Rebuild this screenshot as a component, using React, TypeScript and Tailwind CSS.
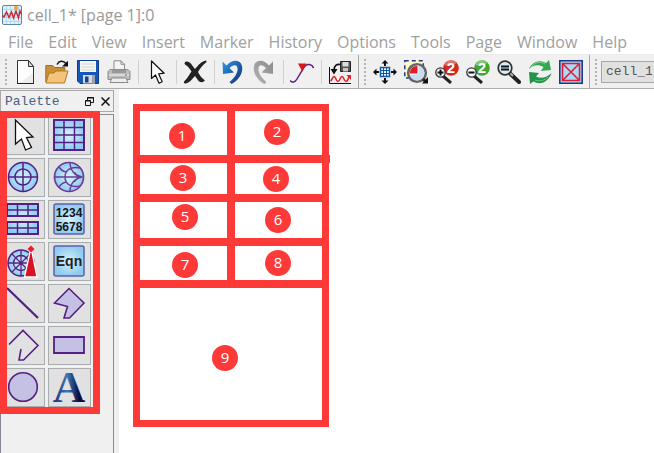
import { useState, type ReactNode } from "react";

// ---------- toolbar icons (24x24) ----------

function Icon24({ children }: { children: ReactNode }) {
  return (
    <svg width="24" height="24" viewBox="0 0 24 24" fill="none" aria-hidden="true">
      {children}
    </svg>
  );
}

function NewIcon() {
  return (
    <Icon24>
      <path d="M3.500 .5h11l5 6v17h-16z" fill="#fdfdfd" stroke="#333" />
      <path d="M14.500 .5v6h5z" fill="#ddd" stroke="#333" strokeLinejoin="round" />
      <path d="M6 23h13V13z" fill="#ececec" />
      <path d="M3 23.500h17" stroke="#222" />
    </Icon24>
  );
}

function OpenIcon() {
  return (
    <Icon24>
      <path d="M.8 22V5.500h7l2 2h10V12" fill="#c98f35" stroke="#a46d22" />
      <path d="M1 23l3-10h5l2-2h12l-3.500 12z" fill="#f2c378" stroke="#b37a2b" strokeLinejoin="round" />
      <path d="M12 4.500c2-4 6-4.500 9-1" stroke="#111" strokeWidth="1.500" />
      <path d="M23 .8v5.700h-6z" fill="#111" />
    </Icon24>
  );
}

function SaveIcon() {
  return (
    <Icon24>
      <path d="M1.500 .5h21v23H4l-2.500-2.500z" fill="#1755b8" stroke="#0c3c8e" />
      <path d="M4 1h16v11H4z" fill="#f3f5f0" />
      <path d="M5.500 4h13M5.500 7h13M5.500 10h13" stroke="#d3d8d0" />
      <path d="M7 15h12v8.500H7z" fill="#d5d9e0" />
      <path d="M9 16.500h3.500v6H9z" fill="#16418f" />
      <path d="M16 15h3v8.500h-3z" fill="#9aa1ad" />
    </Icon24>
  );
}

function PrintIcon() {
  return (
    <Icon24>
      <path d="M7 11V.8h7l3.500 3.500V11z" fill="#f5f5f5" stroke="#8b8b8b" />
      <path d="M14 .8v3.500h3.500" stroke="#8b8b8b" />
      <path d="M3 9.500h18l2 2v8H1v-8z" fill="#bdbdbd" stroke="#8c8c8c" />
      <path d="M5 10h14v3H5z" fill="#999" />
      <path d="M2 15h20" stroke="#e3e3e3" strokeWidth="1.500" />
      <path d="M5 18h14l2 4.500H3z" fill="#ededed" stroke="#8b8b8b" />
      <path d="M18 15h2" stroke="#666" />
    </Icon24>
  );
}

function SelectIcon() {
  return (
    <Icon24>
      <path
        d="M6.500 1v17.500l4-3.500 3.500 8.200 3.200-1.400-3.600-8 5.600-.6z"
        fill="#fff"
        stroke="#111"
        strokeWidth="1.200"
        strokeLinejoin="round"
      />
    </Icon24>
  );
}

function DeleteIcon() {
  return (
    <Icon24>
      <path d="M3 1.500c4.500-.5 6 4 9 7.500C15.500 5 18 1.500 23 .5c.8.500.7 1.500 0 2-4 3-5.500 5.500-8 9.500 2 3.500 3.500 6 7 8.500-3 3-5.500 2-7.500-1L12 16c-3 3-5 6.500-9 7.500-2 .3-3-1-1.500-2.500C5 17.500 6.500 14 8.500 11.500 6.500 8 4.500 6 2 4.500 1 3.500 1.800 2 3 1.500z" fill="#222" />
    </Icon24>
  );
}

function UndoIcon() {
  return (
    <Icon24>
      <defs>
        <linearGradient id="undoFill" x1="0" y1="0" x2="1" y2="1">
          <stop offset="0" stopColor="#2b9ae6" />
          <stop offset="1" stopColor="#14296f" />
        </linearGradient>
      </defs>
      <path d="M1.500 1.500l4 4C10 0 17-1 20 3.500c4 7-2 17-9.500 20.500l-2-2C15 17 18 10 16 6.500c-1.500-2.500-5-1-7.500 1.500l4.500 4.500-11 1.500z" fill="url(#undoFill)" />
    </Icon24>
  );
}

function RedoIcon() {
  return (
    <Icon24>
      <defs>
        <linearGradient id="redoFill" x1="1" y1="0" x2="0" y2="1">
          <stop offset="0" stopColor="#8a8a8a" />
          <stop offset="1" stopColor="#b5b5b5" />
        </linearGradient>
      </defs>
      <path d="M21 1.500l-4 4C12.500 0 6-1 3 3.500c-4 7 2 17 9.500 20.500l2-2C8 17 5 10 7 6.500 8.500 4 11.500 5.500 14 8l-4.500 4.500L21 14z" fill="url(#redoFill)" />
    </Icon24>
  );
}

function MarkerIcon() {
  return (
    <Icon24>
      <path d="M0 20.500c2 2.500 5 2 7-1.500l6-10c2-4 4-5 6.500-4.500C22 5 23 6 23.500 8" stroke="#5b1f8c" strokeWidth="1.500" />
      <path d="M8 3.500h8.500l-4.200 8z" fill="#d8141c" />
    </Icon24>
  );
}

function DataFileIcon() {
  return (
    <Icon24>
      <path d="M12.500 1.500h10v10h-10z" fill="#555" stroke="#222" />
      <path d="M14.500 2h6v4.500h-6z" fill="#ddd" />
      <path d="M15 8h5v3.500h-5z" fill="#c5c5c5" />
      <path d="M12 4.500C9 4 6.500 5 6 10" stroke="#111" strokeWidth="1.700" />
      <path d="M2.500 9h7L6 14.500z" fill="#111" />
      <path d="M1.500 7v16.500H23" stroke="#111" />
      <path d="M2.500 21c2-1 2-4.500 3.500-4.500 2 0 2 5 4 5s2-5 4-5 2 5 4 5 2-3 3-5" stroke="#e0202b" strokeWidth="1.500" />
      <path d="M18.500 15h4.500v5z" fill="#e0202b" />
    </Icon24>
  );
}

function ViewAllIcon() {
  return (
    <Icon24>
      <path d="M7.500 7.500h9v9h-9z" fill="#e8f5ff" stroke="#0c58ad" strokeWidth="1.500" />
      <path d="M10.500 7.500v9M13.500 7.500v9M7.500 10.500h9M7.500 13.500h9" stroke="#0c58ad" />
      <path d="M12 0l3.500 3.500H13V6h-2V3.500H8.500zM12 24l-3.500-3.500H11V18h2v2.500h2.500zM0 12l3.500-3.500V11H6v2H3.500v2.500zM24 12l-3.500 3.500V13H18v-2h2.500V8.500z" fill="#111" />
    </Icon24>
  );
}

function ZoomAreaIcon() {
  return (
    <Icon24>
      <path d="M.8 .8h18.500V18H.8z" fill="#fafbc4" stroke="#1e3d8c" strokeWidth="1.500" strokeDasharray="4 3" />
      <circle cx="13" cy="13" r="8.800" fill="#dceaf5" stroke="#666" strokeWidth="2.600" />
      <path d="M13 5.500a7.500 7.500 0 1 1-7.500 8H13z" fill="#c9dcf0" />
      <path d="M14 14H6c-.5-5 3-8.500 8-8z" fill="#e31c23" />
      <path d="M14 5.500V14H6" stroke="#fff" />
      <path d="M19 19l3 3" stroke="#222" strokeWidth="3" />
      <path d="M18 23.500h6V17z" fill="#111" />
    </Icon24>
  );
}

function ZoomByTwoIcon({ zoomIn }: { zoomIn: boolean }) {
  return (
    <Icon24>
      <circle cx="16" cy="8" r="7.800" fill={zoomIn ? "#d42820" : "#43a72f"} />
      <path d="M9.500 5a7 7 0 0 1 12-2c-3 3-8 3-12 2z" fill="#fff" opacity=".35" />
      <text x="16" y="13" textAnchor="middle" fontFamily="Liberation Sans, sans-serif" fontWeight="700" fontSize="15" fill="#fff">
        2
      </text>
      <path d="M8 16l8 7" stroke="#222" strokeWidth="3" />
      <circle cx="5.500" cy="12.500" r="4.700" fill="#f4faff" stroke="#333" strokeWidth="1.300" />
      <path d={zoomIn ? "M2.500 12.500h6M5.500 9.500v6" : "M2.500 12.500h6"} stroke="#111" strokeWidth="2" />
    </Icon24>
  );
}

function ZoomIcon() {
  return (
    <Icon24>
      <path d="M12.500 13l9.500 9" stroke="#222" strokeWidth="4" strokeLinecap="round" />
      <path d="M13 13l3 3" stroke="#aaa" strokeWidth="2" />
      <circle cx="8" cy="8" r="6.800" fill="#d8ebf8" stroke="#333" strokeWidth="1.700" />
      <path d="M4 6.500h8M4 9.500h8" stroke="#111" strokeWidth="2" />
    </Icon24>
  );
}

function RefreshIcon() {
  return (
    <Icon24>
      <path d="M1 9C4 2 11-1 18 3l3-3 2 10-10 1 2.500-4C10 4 5 5 1 9z" fill="#35a84f" />
      <path d="M1 12l10 1-3 3.500c5 2.500 10 1.500 15.500-3.500C21 21 13 26 5.500 21.500L2 24z" fill="#229447" />
      <path d="M3 7c4-5 9-6 14-3" stroke="#81d08b" />
      <path d="M7 20c5 2 10 0 13-3" stroke="#6bc77b" />
    </Icon24>
  );
}

function NoPlotIcon() {
  return (
    <Icon24>
      <path d="M.8 .8h22.400v22.400H.8z" fill="#a9daf6" stroke="#143d86" strokeWidth="1.600" />
      <path d="M3.500 3.500h17v17h-17zM3.500 3.500l17 17M20.500 3.500l-17 17" stroke="#e31b35" strokeWidth="1.600" />
    </Icon24>
  );
}

// ---------- palette icons (32x32) ----------

function Icon32({ children }: { children: ReactNode }) {
  return (
    <svg className="shrink-0 overflow-visible" width="32" height="32" viewBox="0 0 32 32" fill="none" aria-hidden="true">
      {children}
    </svg>
  );
}

function PointerIcon() {
  return (
    <Icon32>
      <path d="M8.500 1v24l6-5 4 11 6-2.500-5-10 6.500-.5z" fill="#fff" stroke="#111" strokeWidth="1.300" />
    </Icon32>
  );
}

function RectPlotIcon() {
  return (
    <Icon32>
      <path d="M1 1h30v30H1z" fill="url(#skyFill)" stroke="#542084" strokeWidth="2" />
      <path d="M11 1v30M21.500 1v30M1 8.500h30M1 16h30M1 23.500h30" stroke="#542084" strokeWidth="1.500" />
    </Icon32>
  );
}

function PolarIcon() {
  return (
    <Icon32>
      <circle cx="16" cy="16" r="14.500" fill="url(#skyFill)" stroke="#542084" strokeWidth="1.500" />
      <circle cx="16" cy="16" r="8" stroke="#542084" strokeWidth="1.500" />
      <path d="M16 1v30M1 16h30" stroke="#542084" strokeWidth="1.500" />
    </Icon32>
  );
}

function SmithIcon() {
  return (
    <Icon32>
      <circle cx="16" cy="16" r="14.500" fill="url(#skyFill)" stroke="#6a3b98" strokeWidth="1.700" />
      <path
        d="M1.500 16h28M29 16C22 15 17 9 17 1.500M29 16c-7 1-12 7-12 14.500M27 7c-9-2-15 2-15 9s6 11 15 9M29 16c-4-1-7-3-7.500-5M29 16c-4 1-7 3-7.500 5M6 6c2 3 4 4.500 7.500 5M6 26c2-3 4-4.500 7.500-5"
        stroke="#6a3b98"
        strokeWidth="1.400"
      />
    </Icon32>
  );
}

function StackedIcon() {
  return (
    <Icon32>
      <path d="M0 1h31v12H0zM0 19h31v12H0z" fill="url(#skyFill)" stroke="#542084" strokeWidth="2" />
      <path d="M10.500 1v12M21 1v12M0 7h31M10.500 19v12M21 19v12M0 25h31" stroke="#542084" strokeWidth="1.500" />
    </Icon32>
  );
}

function ListIcon() {
  return (
    <Icon32>
      <rect x="1" y="1" width="30" height="30" rx="2" fill="url(#skyFill)" stroke="#5f5fa8" strokeWidth="1.500" />
      <g fontFamily="Liberation Sans, sans-serif" fontWeight="700" fontSize="12" fill="#151515" textAnchor="middle">
        <text x="16" y="14">1234</text>
        <text x="16" y="28">5678</text>
      </g>
    </Icon32>
  );
}

function AntennaIcon() {
  return (
    <Icon32>
      <circle cx="14" cy="18" r="13" fill="url(#skyFill)" stroke="#542084" strokeWidth="1.500" />
      <circle cx="14" cy="18" r="7.500" stroke="#542084" strokeWidth="1.300" />
      <path d="M14 5v26M1 18h26M5 9l18 18M23 9L5 27" stroke="#542084" strokeWidth="1.300" />
      <path d="M23 7l-5.500 25h12.500L25 7z" fill="#d81324" stroke="#fff" strokeWidth="1.300" />
      <path d="M24 .5l3.500 3.500L24 7.500 20.500 4z" fill="#f01c28" />
    </Icon32>
  );
}

function EquationIcon() {
  return (
    <Icon32>
      <rect x="1" y="1" width="30" height="30" rx="2" fill="url(#skyFill)" stroke="#5f5fa8" strokeWidth="1.500" />
      <text x="16" y="21" textAnchor="middle" fontFamily="Liberation Sans, sans-serif" fontWeight="700" fontSize="14" fill="#222">
        Eqn
      </text>
    </Icon32>
  );
}

function LineIcon() {
  return (
    <Icon32>
      <path d="M0 1l31 30" stroke="#542084" strokeWidth="2.300" />
    </Icon32>
  );
}

function PolygonIcon() {
  return (
    <Icon32>
      <path d="M16 1.500L31 16 16.500 31H11l3.500-11.500L1.500 16z" fill="#c5c1e4" stroke="#542084" strokeWidth="1.600" />
    </Icon32>
  );
}

function PolylineIcon() {
  return (
    <Icon32>
      <path d="M2 15.500L16 1.500 31 16.500 16.500 31H12l2-11" stroke="#542084" strokeWidth="1.600" />
    </Icon32>
  );
}

function RectangleIcon() {
  return (
    <Icon32>
      <path d="M1 8h30v16H1z" fill="#c5c1e4" stroke="#542084" strokeWidth="1.800" />
    </Icon32>
  );
}

function CircleIcon() {
  return (
    <Icon32>
      <circle cx="16" cy="16" r="14.300" fill="#c5c1e4" stroke="#542084" strokeWidth="1.600" />
    </Icon32>
  );
}

function TextIcon() {
  return (
    <Icon32>
      <defs>
        <linearGradient id="textFill" x1="0" y1="0" x2="1" y2="0">
          <stop offset="0" stopColor="#1d2c78" />
          <stop offset=".45" stopColor="#3c79b8" />
          <stop offset=".8" stopColor="#0d0a3c" />
        </linearGradient>
      </defs>
      <text x="16" y="31" textAnchor="middle" fontFamily="Liberation Serif, serif" fontWeight="700" fontSize="45" fill="url(#textFill)">
        A
      </text>
    </Icon32>
  );
}

// ---------- data ----------

const menus = ["File", "Edit", "View", "Insert", "Marker", "History", "Options", "Tools", "Page", "Window", "Help"];

type Tool = { name: string; icon: ReactNode };

const editTools: Tool[][] = [
  [
    { name: "New", icon: <NewIcon /> },
    { name: "Open", icon: <OpenIcon /> },
    { name: "Save", icon: <SaveIcon /> },
    { name: "Print", icon: <PrintIcon /> },
  ],
  [{ name: "Select", icon: <SelectIcon /> }],
  [{ name: "Delete", icon: <DeleteIcon /> }],
  [
    { name: "Undo", icon: <UndoIcon /> },
    { name: "Redo", icon: <RedoIcon /> },
  ],
  [{ name: "New marker", icon: <MarkerIcon /> }],
  [{ name: "Data file tool", icon: <DataFileIcon /> }],
];

const viewTools: Tool[][] = [
  [
    { name: "View all", icon: <ViewAllIcon /> },
    { name: "Zoom area", icon: <ZoomAreaIcon /> },
    { name: "Zoom in by 2", icon: <ZoomByTwoIcon zoomIn={true} /> },
    { name: "Zoom out by 2", icon: <ZoomByTwoIcon zoomIn={false} /> },
    { name: "Actual size", icon: <ZoomIcon /> },
    { name: "Refresh", icon: <RefreshIcon /> },
    { name: "Disable updates", icon: <NoPlotIcon /> },
  ],
];

const paletteTools: Tool[] = [
  { name: "Pointer", icon: <PointerIcon /> },
  { name: "Rectangular plot", icon: <RectPlotIcon /> },
  { name: "Polar plot", icon: <PolarIcon /> },
  { name: "Smith chart", icon: <SmithIcon /> },
  { name: "Stacked plot", icon: <StackedIcon /> },
  { name: "List", icon: <ListIcon /> },
  { name: "Antenna plot", icon: <AntennaIcon /> },
  { name: "Equation", icon: <EquationIcon /> },
  { name: "Line", icon: <LineIcon /> },
  { name: "Polygon", icon: <PolygonIcon /> },
  { name: "Polyline", icon: <PolylineIcon /> },
  { name: "Rectangle", icon: <RectangleIcon /> },
  { name: "Circle", icon: <CircleIcon /> },
  { name: "Text", icon: <TextIcon /> },
];

// numbered notes sit freely inside their boxes
const notes = [
  { id: 1, place: "left-[29px] top-3" },
  { id: 2, place: "left-[29px] top-2" },
  { id: 3, place: "left-[30px] top-[2px]" },
  { id: 4, place: "left-[28px] top-[3px]" },
  { id: 5, place: "left-8 top-[2px]" },
  { id: 6, place: "left-[30px] top-[5px]" },
  { id: 7, place: "left-8 top-[6px]" },
  { id: 8, place: "left-[30px] top-1" },
  { id: 9, place: "left-[72px] top-[57px]" },
];

// ---------- parts ----------

function ToolBar({ groups }: { groups: Tool[][] }) {
  return (
    <div className="flex shrink-0 items-center border-r border-[#a8a8a8] pr-[2px]">
      <Handle />
      {groups.map((group, index) => (
        <div className="flex items-center" key={group[0].name}>
          {index > 0 ? <div className="mx-[3px] h-6 w-px bg-[#d0d0d0]" /> : null}
          {group.map((tool) => (
            <button
              aria-label={tool.name}
              className="flex h-8 w-[31px] items-center justify-center pr-px hover:bg-[#dcebf7]"
              key={tool.name}
              type="button"
            >
              {tool.icon}
            </button>
          ))}
        </div>
      ))}
    </div>
  );
}

// dotted grip at the start of a toolbar
function Handle() {
  return (
    <div className="flex w-[11px] shrink-0 justify-center">
      <div className="h-[26px] border-l-2 border-dotted border-[#b4b4b4]" />
    </div>
  );
}

function Palette() {
  const [active, setActive] = useState("Pointer");

  return (
    <aside className="flex w-[119px] shrink-0 flex-col bg-[#f0f0f0] pt-px pr-[5px]">
      <div className="mb-[2px] flex h-[22px] items-center border border-[#a8a8a8] pl-1">
        <h2 className="flex-1 pt-px font-['Liberation_Mono',monospace] text-[13px] text-[#47617f]">Palette</h2>
        <button aria-label="Float" className="flex h-4 w-4 items-center justify-center" type="button">
          <svg width="9" height="9" viewBox="0 0 9 9" fill="none" stroke="#111">
            <path d="M2.500 3V.5h6v5H6M2 1h7M.5 3.500h5v5h-5zM0 4h6" />
          </svg>
        </button>
        <button aria-label="Close" className="flex h-4 w-4 items-center justify-center" type="button">
          <svg width="9" height="9" viewBox="0 0 9 9" fill="none" stroke="#111" strokeWidth="1.500">
            <path d="M.5 .5l8 8M8.500 .5l-8 8" />
          </svg>
        </button>
      </div>
      <div className="relative flex-1 border border-b-0 border-[#868b93] p-px">
        <div className="grid w-[89px] grid-cols-2 gap-[3px]">
          {paletteTools.map((tool) => (
            <button
              aria-label={tool.name}
              aria-pressed={active === tool.name}
              className="flex h-[39px] items-center justify-center border border-[#a9adb0] bg-[#e1e1e1] pr-[2px] pb-px"
              key={tool.name}
              onClick={() => setActive(tool.name)}
              type="button"
            >
              {tool.icon}
            </button>
          ))}
        </div>
        {/* highlight around the tools */}
        <div className="pointer-events-none absolute -top-1 -left-px h-[303px] w-[100px] border-[7px] border-[#fd3a38]" />
      </div>
    </aside>
  );
}

function PageLayout() {
  return (
    <div className="relative grid w-[196px] grid-cols-2 grid-rows-[44px_31px_36px_34px_132px] gap-2 bg-[#fd3a38] p-[7px]">
      {notes.map((note) => (
        <div className="relative bg-white last:col-span-2" key={note.id}>
          <span
            className={`absolute flex h-[26px] w-[26px] items-center justify-center rounded-full bg-[#fd3a38] pb-[3px] text-[15px] leading-6 text-white ${note.place}`}
          >
            {note.id}
          </span>
          {/* line ends that run past the frame */}
          {note.id === 2 ? <i className="absolute -right-2 -bottom-2 h-2 w-px bg-[#fd3a38]" /> : null}
          {note.id === 7 ? <i className="absolute -right-2 -bottom-[9px] h-2 w-2 bg-[#fd3a38]" /> : null}
        </div>
      ))}
    </div>
  );
}

export default function App() {
  return (
    <div className="flex min-h-screen flex-col overflow-hidden bg-white font-['Open_Sans','Noto_Sans',sans-serif]">
      {/* shared fill for the plot icons */}
      <svg className="absolute h-0 w-0" aria-hidden="true">
        <defs>
          <radialGradient id="skyFill">
            <stop offset="0" stopColor="#dcf3fd" />
            <stop offset="1" stopColor="#8fcbf0" />
          </radialGradient>
        </defs>
      </svg>

      <header className="flex h-[30px] items-center gap-[5px] pl-[2px]">
        <svg width="20" height="20" viewBox="0 0 20 20" fill="none" aria-hidden="true">
          <rect x=".5" y=".5" width="19" height="19" rx="1.500" fill="#e3f3fb" stroke="#5c87a6" />
          <path d="M4.500 1v18M8.500 1v18M12.500 1v18M16.500 1v18M1 4.500h18M1 8.500h18M1 12.500h18M1 16.500h18" stroke="#b4d9ec" />
          <path d="M0 10l2 2 2.500-5L7 12.500 9.500 7l2 6 2.500-7 2.500 7L18 6l2 4" stroke="#cf2630" strokeWidth="1.400" />
          <circle cx="14" cy="3" r="2" fill="#f4a12c" />
        </svg>
        <h1 className="text-[16px] leading-6 text-[#999]">cell_1* [page 1]:0</h1>
      </header>

      <nav className="flex h-[25px] items-center gap-[15px] border-b border-[#ebebeb] pl-2">
        {menus.map((menu) => (
          <button className="text-[16px] leading-6 text-[#a0a0a0]" key={menu} type="button">
            {menu}
          </button>
        ))}
      </nav>

      <div className="flex h-[34px] overflow-hidden border-b border-[#adadad] bg-[#f0f0f0]">
        <ToolBar groups={editTools} />
        <ToolBar groups={viewTools} />
        <div className="flex shrink-0 items-center">
          <Handle />
          <select
            aria-label="Design"
            className="h-[22px] w-32 appearance-none border border-[#a5a5a5] bg-[#e1e1e1] pl-1 font-['Liberation_Mono',monospace] text-[13px] text-[#555]"
          >
            <option>cell_1</option>
          </select>
        </div>
      </div>

      <div className="flex flex-1">
        <Palette />
        <main className="flex-1 pt-[15px] pl-[14px]">
          <PageLayout />
        </main>
      </div>
    </div>
  );
}
